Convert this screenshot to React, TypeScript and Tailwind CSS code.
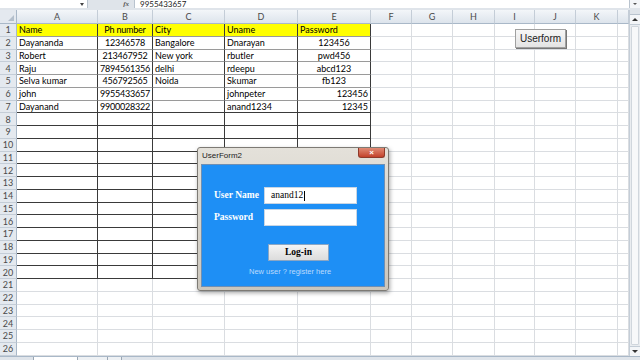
import React from "react";

const sheet = [
  ["Name", "Ph number", "City", "Uname", "Password"],
  ["Dayananda", "12346578", "Bangalore", "Dnarayan", "123456"],
  ["Robert", "213467952", "New york", "rbutler", "pwd456"],
  ["Raju", "7894561356", "delhi", "rdeepu", "abcd123"],
  ["Selva kumar", "456792565", "Noida", "Skumar", "fb123"],
  ["john", "9955433657", "", "johnpeter", "123456"],
  ["Dayanand", "9900028322", "", "anand1234", "12345"],
];

const letters = ["A", "B", "C", "D", "E", "F", "G", "H", "I", "J", "K", ""];

const alignFor = (r: number, c: number) => {
  if (c === 1) return "justify-center px-0 tracking-[-0.2px]";
  if (c === 4 && r >= 1 && r <= 4) return "justify-center px-[2px]";
  if (c === 4 && r >= 5) return "justify-end px-[2px]";
  return "justify-start px-[2px]";
};

const cellClass = (r: number, c: number) => {
  // column headers
  if (r === 0) {
    if (c === 0)
      return "relative bg-[#e4e9ef] border-r border-b border-r-[#a9b8c8] border-b-[#a9b8c8]";
    return "flex items-center justify-center bg-gradient-to-b from-[#f3f6f9] to-[#dde4ec] border-r border-b border-r-[#c4cdd7] border-b-[#a9b8c8] text-[#4a4a4a]";
  }
  // row numbers
  if (c === 0)
    return "flex items-center justify-center bg-[#e4e9ef] border-r border-b border-r-[#a9b8c8] border-b-[#c4cdd7] text-[#4a4a4a]";
  // bordered table A1:E20
  if (r <= 20 && c <= 5) {
    const bottom = r <= 6 ? "border-b-[#9a9a9a]" : "border-b-[#3a3a3a]";
    const bg = r === 1 ? "bg-[#ffff00]" : "bg-white";
    return `flex items-center border-r border-b border-r-[#3a3a3a] ${bottom} ${bg} ${alignFor(r - 1, c - 1)}`;
  }
  return "bg-white border-r border-b border-r-[#dadde1] border-b-[#dadde1]";
};

const Sheet = () => {
  const cells: React.ReactNode[] = [];
  for (let r = 0; r <= 26; r++) {
    for (let c = 0; c <= 12; c++) {
      let text = "";
      if (r === 0 && c > 0) text = letters[c - 1];
      else if (c === 0 && r > 0) text = String(r);
      else if (r >= 1 && r <= 7 && c >= 1 && c <= 5) text = sheet[r - 1][c - 1];
      cells.push(
        <div key={`${r}-${c}`} className={`overflow-hidden whitespace-nowrap ${cellClass(r, c)}`}>
          {r === 0 && c === 0 ? (
            <div className="absolute right-[2px] bottom-[2px] w-0 h-0 border-l-[6px] border-b-[6px] border-l-transparent border-b-[#b3bfcc]" />
          ) : (
            text
          )}
        </div>
      );
    }
  }
  return (
    <div className="grid grid-cols-[17px_81px_55px_72px_73px_73px_41px_41px_42px_40px_41px_42px_11px] grid-rows-[14px_repeat(26,12.75px)] text-[9px] leading-none text-black font-['Lato',sans-serif]">
      {cells}
    </div>
  );
};

const ScrollBar = () => (
  <div className="w-[11px] flex flex-col bg-[#e9ecf0] border-l border-[#c4cdd7]">
    <div className="h-[5px] bg-[#dfe4ea] border-b border-[#b9c3ce]" />
    <div className="h-[10px] flex items-center justify-center bg-[#f3f5f8] border-b border-[#c4cdd7]">
      <div className="w-0 h-0 border-l-[3px] border-r-[3px] border-b-[3px] border-l-transparent border-r-transparent border-b-[#333]" />
    </div>
    <div className="flex-1 mx-[1px] my-[1px] bg-[#f7f8fa] border border-[#d0d6dd] rounded-[1px]" />
    <div className="h-[10px] flex items-center justify-center bg-[#f3f5f8] border-t border-[#c4cdd7]">
      <div className="w-0 h-0 border-l-[3px] border-r-[3px] border-t-[3px] border-l-transparent border-r-transparent border-t-[#333]" />
    </div>
  </div>
);

const LoginForm = () => (
  <div className="absolute left-[197px] top-[147px] w-[192px] h-[144px] rounded-[3px] border border-[#7d7a74] bg-gradient-to-b from-[#e4e1da] to-[#cbc6bc] shadow-[1px_2px_4px_rgba(0,0,0,0.35)] flex flex-col px-[3px] pb-[3px]">
    <div className="h-[16px] flex items-center justify-between">
      <span className="text-[8px] text-[#222] font-['Liberation_Sans',sans-serif] pl-[1px]">UserForm2</span>
      <div className="self-start w-[27px] h-[10px] rounded-b-[3px] bg-gradient-to-b from-[#e08a74] to-[#c2402a] border border-[#8e3a2a] border-t-0 flex items-center justify-center text-white text-[8px] leading-none font-bold font-['Liberation_Sans',sans-serif]">
        ×
      </div>
    </div>
    <div className="flex-1 bg-[#1e8ff5] border border-[#6f8fb3] flex flex-col items-start pt-[22px] pl-[12px]">
      <div className="flex items-center">
        <span className="w-[50px] text-[9.5px] font-bold text-white font-['Liberation_Serif',serif]">User Name</span>
        <div className="w-[93px] h-[17px] bg-white border border-[#c9d6e4] flex items-center pl-[6px] text-[9.5px] text-black font-['Liberation_Serif',serif]">
          anand12<span className="inline-block w-[1px] h-[10px] bg-black ml-[1px]" />
        </div>
      </div>
      <div className="flex items-center mt-[5px]">
        <span className="w-[50px] text-[9.5px] font-bold text-white font-['Liberation_Serif',serif]">Password</span>
        <div className="w-[93px] h-[17px] bg-white border border-[#c9d6e4]" />
      </div>
      <div className="ml-[54px] mt-[18px] w-[61px] h-[17px] bg-gradient-to-b from-[#f4f4f4] to-[#dcdcdc] border border-[#8aa6c4] flex items-center justify-center text-[9.5px] font-bold text-black font-['Liberation_Serif',serif]">
        Log-in
      </div>
      <span className="ml-[35px] mt-[5px] text-[7.5px] text-[#bcdafc] font-['Liberation_Sans',sans-serif]">
        New user ? register here
      </span>
    </div>
  </div>
);

const App = () => {
  return (
    <div className="relative w-[640px] h-[360px] overflow-hidden bg-white font-['Lato',sans-serif]">
      {/* formula bar */}
      <div className="h-[10px] bg-[#dfe4ea] flex items-start">
        <div className="w-[88px] h-[8px] bg-white border-r border-[#b9c3ce] flex justify-end items-end pr-[3px]">
          <div className="w-0 h-0 border-l-[2px] border-r-[2px] border-t-[3px] border-l-transparent border-r-transparent border-t-[#444] mb-[2px]" />
        </div>
        <div className="w-[46px] h-[8px] flex items-end justify-end pr-[5px]">
          <span className="text-[7px] leading-none italic font-bold text-[#555] font-['Liberation_Serif',serif]">fx</span>
        </div>
        <div className="flex-1 h-[8px] bg-white border-l border-[#b9c3ce] flex items-center pl-[5px] overflow-hidden">
          <span className="text-[8px] leading-[8px] text-[#222]">9955433657</span>
        </div>
        <div className="w-[11px] h-[8px] bg-[#f3f5f8] border-l border-[#b9c3ce] flex items-center justify-center">
          <div className="w-0 h-0 border-l-[2px] border-r-[2px] border-t-[2px] border-l-transparent border-r-transparent border-t-[#555]" />
        </div>
      </div>

      {/* grid + scroll */}
      <div className="flex h-[345.5px]">
        <Sheet />
        <ScrollBar />
      </div>

      {/* sheet tabs */}
      <div className="h-[5px] bg-[#dfe4ea] border-t border-[#a9b8c8] flex items-start">
        <div className="w-[33px]" />
        <div className="w-[45px] h-full bg-white border-x border-[#9aa6b3]" />
        <div className="w-[30px] h-full bg-[#eef1f4] border-r border-[#9aa6b3]" />
        <div className="w-[14px] h-full bg-[#eef1f4] border-r border-[#9aa6b3]" />
      </div>

      {/* sheet button */}
      <div className="absolute left-[515px] top-[29px] w-[51px] h-[19px] bg-gradient-to-b from-[#f7f7f7] to-[#e4e4e4] border border-[#a0a0a0] shadow-[1px_1px_0_#777] flex items-center justify-center text-[10px] text-[#222] font-['Liberation_Sans',sans-serif]">
        Userform
      </div>

      <LoginForm />
    </div>
  );
};

export default App;
